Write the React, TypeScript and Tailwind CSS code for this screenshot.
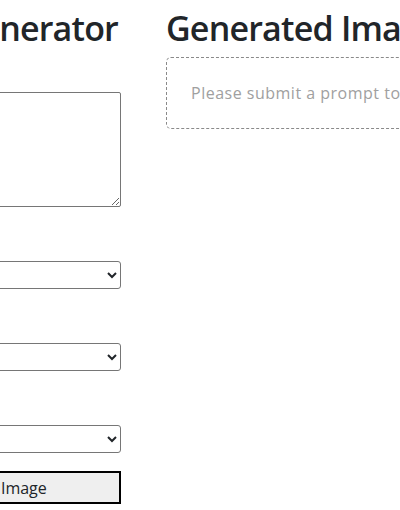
import React from "react";

const fields = [
  { id: "size", label: "Size:" },
  { id: "style", label: "Style:" },
  { id: "count", label: "Count:" },
];

function Field({ id, label }: { id: string; label: string }) {
  return (
    <div className="mt-[22px]">
      <label htmlFor={id} className="block h-6 leading-6 mb-2">
        {label}
      </label>
      <select
        id={id}
        className="block w-full h-[28px] border border-[#767676] rounded-[3px] bg-white px-1"
      >
        <option></option>
      </select>
    </div>
  );
}

export default function App() {
  return (
    <div className="min-h-[510px] bg-white text-[#212529] font-['Open_Sans',sans-serif] overflow-hidden">
      <div className="flex gap-[45px] ml-[-137px] w-[1000px]">
        <div className="w-[258px] shrink-0">
          <div className="flex justify-end whitespace-nowrap pr-[3px] mt-[8px]">
            <h2 className="text-[34px] leading-[41px] font-semibold tracking-[-0.8px]">
              AI Image Generator
            </h2>
          </div>
          <label htmlFor="prompt" className="block h-6 leading-6 mt-[8px] mb-[11px]">
            Prompt:
          </label>
          <textarea
            id="prompt"
            className="block w-full h-[115px] border border-[#767676] rounded-[2px] bg-white p-1"
          />
          <Field {...fields[0]} />
          <Field {...fields[1]} />
          <Field {...fields[2]} />
          <button className="mt-[18px] block w-full h-[33px] border-2 border-black bg-[#efefef] text-base pr-[10px]">
            Generate Image
          </button>
        </div>
        <div className="w-[500px] shrink-0">
          <h2 className="mt-[8px] text-[34px] leading-[41px] font-semibold tracking-[-0.8px] whitespace-nowrap">
            Generated Images
          </h2>
          <div className="mt-[8px] border border-dashed border-[#8a8a8a] rounded-[5px] px-6 py-[23px] text-[#a0a0a0] leading-6 tracking-[0.5px] whitespace-nowrap">
            Please submit a prompt to generate images.
          </div>
        </div>
      </div>
    </div>
  );
}
